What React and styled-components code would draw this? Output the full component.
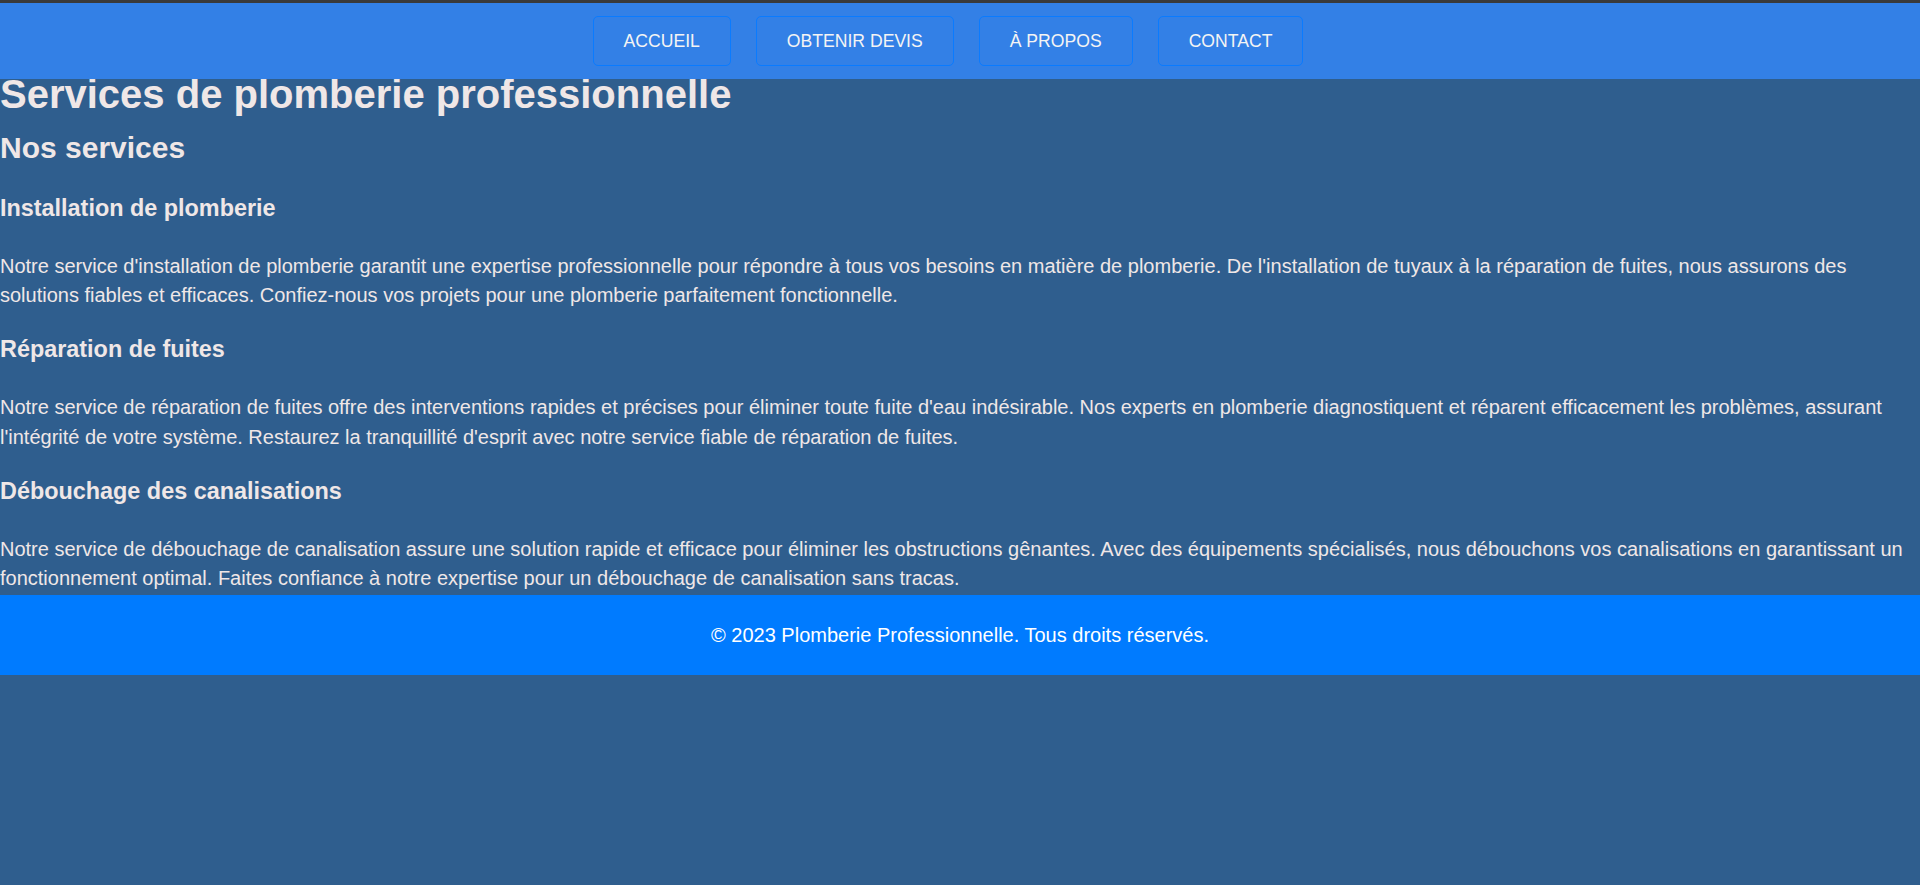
import React from "react";
import styled, { createGlobalStyle } from "styled-components";

const Global = createGlobalStyle`
  html, body { margin: 0; padding: 0; }
  body {
    background: #2f5e8e;
    font-family: "Liberation Sans", Arial, sans-serif;
    color: #efe7e7;
    font-size: 20px;
  }
`;

const Page = styled.div`
  min-height: 885px;
  border-top: 3px solid #3a3a3a;
  box-sizing: border-box;
`;

const Header = styled.header`
  position: fixed;
  top: 3px;
  left: 0;
  right: 0;
  z-index: 10;
  background: #3380e6;
  height: 76px;
  display: flex;
  align-items: center;
  justify-content: center;
  padding-right: 24px;
`;

const Nav = styled.nav`
  display: flex;
  gap: 25px;
`;

const NavButton = styled.a`
  display: inline-block;
  padding: 14px 30px;
  border: 1px solid #0a7bff;
  border-radius: 5px;
  color: #f4f4f4;
  text-decoration: none;
  font-size: 17.6px;
  line-height: 20px;
`;

const Main = styled.main`
  padding-top: 68px;
`;

const Title = styled.h1`
  font-size: 40px;
  line-height: 46px;
  margin: 0;
`;

const SubTitle = styled.h2`
  font-size: 30px;
  line-height: 34px;
  margin: 13.6px 0 30px;
`;

const ServiceTitle = styled.h3`
  font-size: 23.4px;
  line-height: 27px;
  margin: 25.6px 0 0;
`;

const Text = styled.p`
  margin: 30.3px 0 0;
  line-height: 29.3px;
`;

const Footer = styled.footer`
  background: #007bff;
  color: #ffffff;
  height: 80px;
  display: flex;
  align-items: center;
  justify-content: center;
  margin-top: 2px;
`;

const services = [
  {
    title: "Installation de plomberie",
    text: "Notre service d'installation de plomberie garantit une expertise professionnelle pour répondre à tous vos besoins en matière de plomberie. De l'installation de tuyaux à la réparation de fuites, nous assurons des solutions fiables et efficaces. Confiez-nous vos projets pour une plomberie parfaitement fonctionnelle.",
  },
  {
    title: "Réparation de fuites",
    text: "Notre service de réparation de fuites offre des interventions rapides et précises pour éliminer toute fuite d'eau indésirable. Nos experts en plomberie diagnostiquent et réparent efficacement les problèmes, assurant l'intégrité de votre système. Restaurez la tranquillité d'esprit avec notre service fiable de réparation de fuites.",
  },
  {
    title: "Débouchage des canalisations",
    text: "Notre service de débouchage de canalisation assure une solution rapide et efficace pour éliminer les obstructions gênantes. Avec des équipements spécialisés, nous débouchons vos canalisations en garantissant un fonctionnement optimal. Faites confiance à notre expertise pour un débouchage de canalisation sans tracas.",
  },
];

export default function App() {
  return (
    <Page>
      <Global />
      <Header>
        <Nav>
          {["ACCUEIL", "OBTENIR DEVIS", "À PROPOS", "CONTACT"].map((l) => (
            <NavButton href="#" key={l}>{l}</NavButton>
          ))}
        </Nav>
      </Header>
      <Main>
        <Title>Services de plomberie professionnelle</Title>
        <SubTitle>Nos services</SubTitle>
        {services.map((s) => (
          <section key={s.title}>
            <ServiceTitle>{s.title}</ServiceTitle>
            <Text>{s.text}</Text>
          </section>
        ))}
      </Main>
      <Footer>© 2023 Plomberie Professionnelle. Tous droits réservés.</Footer>
    </Page>
  );
}
